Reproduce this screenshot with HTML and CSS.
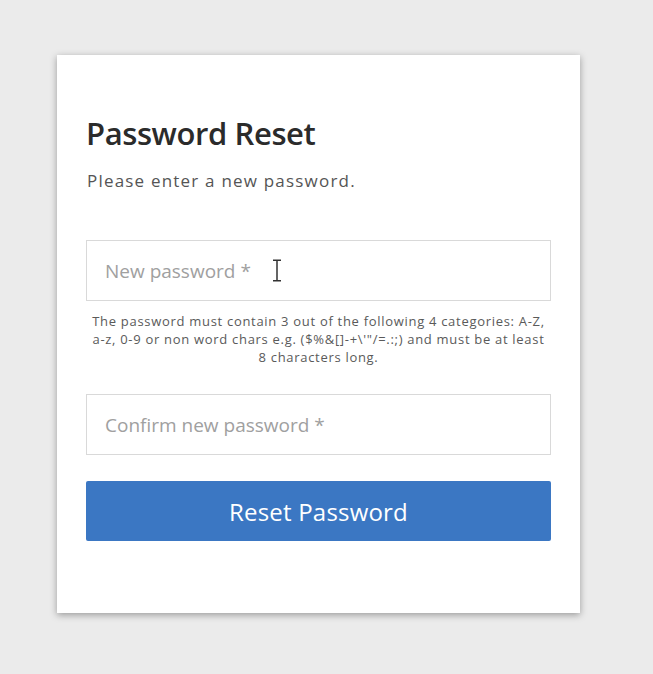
FILE: index.html
```html
<!DOCTYPE html>
<html lang="en">
<head>
<meta charset="utf-8">
<title>Password Reset</title>
<link rel="stylesheet" href="styles.css">
</head>
<body>
<main class="card">
  <h1 class="title">Password Reset</h1>
  <p class="subtitle">Please enter a new password.</p>
  <div class="field">
    <input class="input" type="password" placeholder="New password *">
    <svg class="ibeam" width="10" height="23" viewBox="0 0 10 23" aria-hidden="true">
      <path d="M1 1.2h8M1 21.8h8M5 1.2v20.6" stroke="#333" stroke-width="1.5" fill="none"/>
    </svg>
  </div>
  <p class="hint">The password must contain 3 out of the following 4 categories: A-Z,<br>a-z, 0-9 or non word chars e.g. ($%&amp;[]-+\'"/=.:;) and must be at least<br>8 characters long.</p>
  <input class="input second" type="password" placeholder="Confirm new password *">
  <button class="btn" type="button">Reset Password</button>
</main>
</body>
</html>
```
FILE: styles.css
```css
html, body {
  margin: 0;
  padding: 0;
}
body {
  background: #ebebeb;
  font-family: "Open Sans", "Noto Sans", sans-serif;
  min-height: 674px;
  padding-top: 55px;
  padding-left: 57px;
  box-sizing: border-box;
}
.card {
  width: 523px;
  height: 558px;
  box-sizing: border-box;
  background: #fff;
  box-shadow: 0 2px 7px rgba(0,0,0,0.35);
  padding: 58px 29px 0 29px;
  display: flex;
  flex-direction: column;
}
.title {
  margin: 0;
  font-size: 31px;
  line-height: 40px;
  font-weight: 600;
  color: #2b2b2b;
  letter-spacing: -0.4px;
  padding-left: 0;
}
.subtitle {
  margin: 16px 0 0 1px;
  font-size: 17px;
  line-height: 24px;
  color: #555;
  letter-spacing: 1.2px;
}
.field {
  position: relative;
  margin-top: 47px;
}
.input {
  display: block;
  width: 465px;
  height: 61px;
  box-sizing: border-box;
  border: 1px solid #d9d9d9;
  border-radius: 0;
  padding: 0 18px;
  font-family: "Open Sans", "Noto Sans", sans-serif;
  font-size: 19px;
  color: #333;
  background: #fff;
  outline: none;
}
.input::placeholder {
  color: #a0a0a0;
}
.ibeam {
  position: absolute;
  left: 186px;
  top: 19px;
}
.hint {
  margin: 11px -6px 0 -6px;
  font-size: 13px;
  line-height: 18px;
  color: #5a5a5a;
  text-align: center;
  letter-spacing: 0.7px;
  white-space: nowrap;
}
.second {
  margin-top: 28px;
}
.btn {
  margin-top: 26px;
  width: 465px;
  height: 60px;
  border: none;
  border-radius: 2px;
  background: #3b77c3;
  color: #fff;
  font-family: "Open Sans", "Noto Sans", sans-serif;
  font-size: 24px;
  letter-spacing: 0.2px;
  cursor: pointer;
}
```
